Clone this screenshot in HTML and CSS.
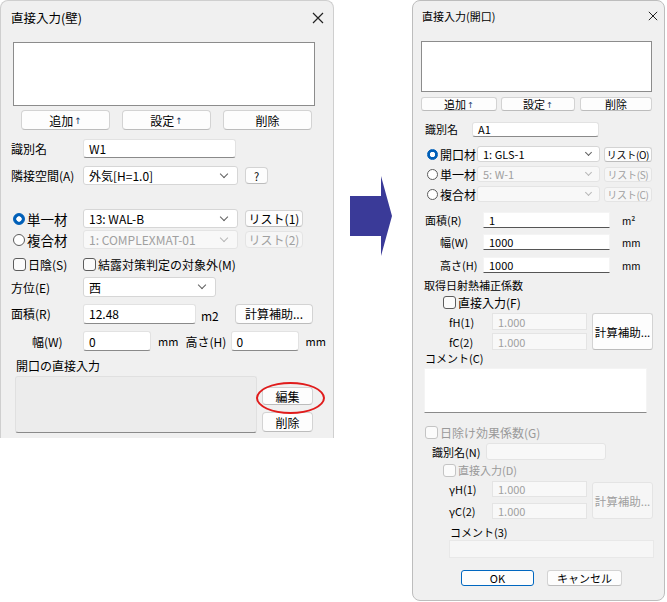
FILE: index.html
```html
<!DOCTYPE html>
<html lang="ja">
<head>
<meta charset="UTF-8">
<title>直接入力</title>
<link rel="stylesheet" href="styles.css">
</head>
<body>
<div class="stage">

  <!-- 壁の直接入力 -->
  <div class="dlg wall">
    <div class="titlebar"><span>直接入力(壁)</span>
      <svg class="close" viewBox="0 0 12 12"><path d="M1 1L11 11M11 1L1 11"/></svg>
    </div>
    <div class="listbox"></div>
    <div class="btnrow">
      <button class="btn">追加<span class="up">↑</span></button>
      <button class="btn">設定<span class="up">↑</span></button>
      <button class="btn">削除</button>
    </div>
    <div class="row w-id"><span class="lbl">識別名</span><div class="edit">W1</div></div>
    <div class="row w-adj"><span class="lbl">隣接空間(A)</span><div class="combo">外気[H=1.0]</div><button class="btn q">?</button></div>
    <div class="row w-single"><span class="opt"><i class="radio on"></i>単一材</span><div class="combo">13: WAL-B</div><button class="btn list">リスト(1)</button></div>
    <div class="row w-complex"><span class="opt"><i class="radio"></i>複合材</span><div class="combo off">1: COMPLEXMAT-01</div><button class="btn list off">リスト(2)</button></div>
    <div class="row w-check"><span class="chk-item first"><i class="box"></i>日陰(S)</span><span class="chk-item"><i class="box"></i>結露対策判定の対象外(M)</span></div>
    <div class="row w-dir"><span class="lbl">方位(E)</span><div class="combo">西</div></div>
    <div class="row w-area"><span class="lbl">面積(R)</span><div class="edit">12.48</div><span class="unit">m2</span><button class="btn calc">計算補助...</button></div>
    <div class="row w-size"><span class="lbl">幅(W)</span><div class="edit">0</div><span class="unit">mm</span><span class="lbl2">高さ(H)</span><div class="edit">0</div><span class="unit">mm</span></div>
    <div class="row w-sub">開口の直接入力</div>
    <div class="row w-box">
      <div class="openlist"></div>
      <div class="side">
        <span class="mark"><button class="btn">編集</button></span>
        <button class="btn del">削除</button>
      </div>
    </div>
  </div>

  <svg class="arrow" viewBox="0 0 42 80"><path d="M0 20H31V0L42 40L31 80V60H0Z"/></svg>

  <!-- 開口の直接入力 -->
  <div class="dlg opening">
    <div class="titlebar"><span>直接入力(開口)</span>
      <svg class="close" viewBox="0 0 12 12"><path d="M1 1L11 11M11 1L1 11"/></svg>
    </div>
    <div class="listbox"></div>
    <div class="btnrow">
      <button class="btn">追加<span class="up">↑</span></button>
      <button class="btn">設定<span class="up">↑</span></button>
      <button class="btn">削除</button>
    </div>
    <div class="row o-id"><span class="lbl">識別名</span><div class="edit">A1</div></div>
    <div class="row o-mat"><span class="opt"><i class="radio on"></i>開口材</span><div class="combo">1: GLS-1</div><button class="btn list">リスト(O)</button></div>
    <div class="row o-mat next"><span class="opt"><i class="radio"></i>単一材</span><div class="combo off">5: W-1</div><button class="btn list off">リスト(S)</button></div>
    <div class="row o-mat next"><span class="opt"><i class="radio"></i>複合材</span><div class="combo off"></div><button class="btn list off">リスト(C)</button></div>
    <div class="row o-area"><span class="lbl">面積(R)</span><div class="edit">1</div><span class="unit">m²</span></div>
    <div class="row o-w"><span class="lbl">幅(W)</span><div class="edit">1000</div><span class="unit">mm</span></div>
    <div class="row o-h"><span class="lbl">高さ(H)</span><div class="edit">1000</div><span class="unit">mm</span></div>
    <div class="row o-head">取得日射熱補正係数</div>
    <div class="row o-chkF"><span class="chk-item"><i class="box"></i>直接入力(F)</span></div>
    <div class="row o-coef">
      <div class="coef-fields">
        <div class="coef-row"><span class="lbl">fH(1)</span><div class="edit off">1.000</div></div>
        <div class="coef-row"><span class="lbl">fC(2)</span><div class="edit off">1.000</div></div>
      </div>
      <button class="btn calc">計算補助...</button>
    </div>
    <div class="row o-cmt">コメント(C)</div>
    <div class="memo"></div>
    <div class="row o-chkG"><span class="chk-item off"><i class="box"></i>日除け効果係数(G)</span></div>
    <div class="row o-idN"><span class="lbl">識別名(N)</span><div class="edit off"></div></div>
    <div class="row o-chkD"><span class="chk-item off"><i class="box"></i>直接入力(D)</span></div>
    <div class="row o-coef o-gam">
      <div class="coef-fields">
        <div class="coef-row"><span class="lbl">γH(1)</span><div class="edit off">1.000</div></div>
        <div class="coef-row"><span class="lbl">γC(2)</span><div class="edit off">1.000</div></div>
      </div>
      <button class="btn calc off">計算補助...</button>
    </div>
    <div class="row o-cmt3">コメント(3)</div>
    <div class="memo memo3"></div>
    <div class="row o-ok"><button class="btn ok">OK</button><button class="btn cancel">キャンセル</button></div>
  </div>

</div>
</body>
</html>
```

FILE: styles.css
```css
* {
    box-sizing: border-box;
}

body {
    margin: 0;
    background: #fff;
    color: #000;
    font-family: "Noto Sans CJK JP", "Noto Sans", sans-serif;
}

.stage {
    display: flex;
    align-items: flex-start;
    width: 667px;
    height: 602px;
}

/* dialogs */
.dlg {
    flex: none;
    background: #f0f0f0;
    border: 1px solid #cfcfcf;
}

.wall {
    width: 334px;
    height: 438px;
    border-bottom: none;
    border-radius: 8px 8px 0 0;
    font-size: 12px;
}

.opening {
    width: 253px;
    height: 601px;
    margin-left: 20px;
    border-radius: 8px;
    border-color: #bdbdbd;
    font-size: 11px;
}

.arrow {
    flex: none;
    width: 42px;
    height: 80px;
    margin: 176px 0 0 16px;
    fill: #3a3a98;
}

.titlebar {
    display: flex;
    align-items: center;
    justify-content: space-between;
}

.close {
    fill: none;
    stroke: #222;
    stroke-width: 1.2;
}

.wall .titlebar {
    height: 33px;
    padding: 0 9px 0 10px;
    font-size: 12.5px;
}

.wall .close {
    width: 12px;
    height: 12px;
}

.opening .titlebar {
    height: 29px;
    padding: 0 6px 0 9px;
}

.opening .close {
    width: 10px;
    height: 10px;
}

/* controls */
.row {
    display: flex;
    align-items: center;
    white-space: nowrap;
}

.lbl {
    flex: none;
}

.listbox {
    background: #fff;
    border: 1px solid #8c8c8c;
}

.btnrow {
    display: flex;
}

.btn {
    flex: none;
    display: flex;
    align-items: center;
    justify-content: center;
    height: 100%;
    padding: 0;
    font: inherit;
    color: #000;
    background: #fdfdfd;
    border: 1px solid #d3d3d3;
    border-bottom-color: #bcbcbc;
    border-radius: 4px;
    white-space: nowrap;
}

.up {
    font-family: "DejaVu Sans", sans-serif;
    font-size: 0.75em;
    color: #1a3a6a;
    margin-left: 1px;
    padding-top: 2px;
}

.edit {
    flex: none;
    display: flex;
    align-items: center;
    height: 100%;
    padding-left: 5px;
    background: #fff;
    border: 1px solid #e2e2e2;
    border-bottom-color: #8a8a8a;
    border-radius: 3px;
}

.combo {
    flex: none;
    display: flex;
    align-items: center;
    height: 100%;
    padding-left: 5px;
    background: #fff;
    border: 1px solid #d6d6d6;
    border-radius: 3px;
}

.combo::after {
    content: "";
    margin-left: auto;
    margin-right: 10px;
    width: 5px;
    height: 5px;
    border-right: 1px solid #606060;
    border-bottom: 1px solid #606060;
    transform: translateY(-2px) rotate(45deg);
}

.combo.off,
.edit.off {
    color: #a0a0a0;
    background: #f8f8f8;
    border-color: #e4e4e4;
}

.combo.off::after {
    border-color: #b8b8b8;
}

.btn.off {
    color: #a0a0a0;
    background: #f6f6f6;
    border-color: #e4e4e4;
}

.opt {
    flex: none;
    display: flex;
    align-items: center;
    gap: 2px;
}

.radio {
    flex: none;
    width: 12px;
    height: 12px;
    border: 1px solid #5c5c5c;
    border-radius: 50%;
    background: #fff;
}

.radio.on {
    border-color: #005fb8;
    background: radial-gradient(circle, #fff 0 2.4px, #005fb8 3px);
}

.chk-item {
    display: flex;
    align-items: center;
    gap: 2px;
}

.box {
    flex: none;
    width: 13px;
    height: 13px;
    border: 1px solid #5c5c5c;
    border-radius: 3px;
    background: #fbfbfb;
}

.chk-item.off {
    color: #9a9a9a;
}

.chk-item.off .box {
    border-color: #c4c4c4;
}

/* 壁 */
.wall .row {
    padding-left: 10px;
}

.wall .lbl {
    width: 72px;
}

.wall .listbox {
    width: 302px;
    height: 64px;
    margin: 8px 0 0 12px;
}

.wall .btnrow {
    height: 20px;
    margin: 4px 0 0 20px;
    gap: 12px;
}

.wall .btnrow .btn {
    width: 89px;
}

.w-id {
    margin-top: 9px;
    height: 19px;
}

.w-id .edit {
    width: 153px;
}

.w-adj {
    margin-top: 8px;
    height: 19px;
}

.wall .combo {
    width: 155px;
}

.q {
    width: 23px;
    margin-left: 7px;
    height: 17px;
    font-size: 11px;
}

.w-single {
    margin-top: 24px;
    height: 19px;
}

.w-complex {
    margin-top: 2px;
    height: 19px;
}

.wall .opt {
    width: 72px;
    padding-left: 2px;
    font-size: 13.5px;
}

.wall .list {
    width: 58px;
    height: 17px;
    margin-left: 7px;
}

.w-check {
    margin-top: 8px;
    height: 14px;
}

.wall .w-check {
    padding-left: 12px;
}

.chk-item.first {
    width: 70px;
}

.w-dir {
    margin-top: 6px;
    height: 20px;
}

.wall .w-dir .combo {
    width: 133px;
}

.w-area {
    margin-top: 6px;
    height: 21px;
}

.w-area .edit {
    width: 113px;
    height: 20px;
}

.w-area .unit {
    width: 34px;
    margin-left: 5px;
    padding-top: 4px;
}

.wall .calc {
    width: 78px;
    height: 20px;
}

.w-size {
    margin-top: 7px;
    height: 20px;
}

.wall .w-size .lbl {
    padding-left: 21px;
}

.w-size .edit {
    width: 68px;
}

.w-size .unit {
    width: 28px;
    margin-left: 7px;
    font-size: 11px;
}

.lbl2 {
    width: 46px;
}

.wall .w-sub {
    margin-top: 6px;
    height: 16px;
    padding-left: 15px;
}

.wall .w-box {
    margin-top: 3px;
    height: 57px;
    padding-left: 14px;
    align-items: stretch;
}

.openlist {
    width: 242px;
    background: #ececec;
    border: 1px solid #e0e0e0;
    border-bottom-color: #8a8a8a;
    border-radius: 3px;
}

.side {
    display: flex;
    flex-direction: column;
    width: 51px;
    margin-left: 5px;
    padding-top: 11px;
    gap: 7px;
}

.mark {
    position: relative;
    display: block;
    height: 18px;
}

.mark .btn {
    width: 100%;
}

.mark::after {
    content: "";
    position: absolute;
    left: -6px;
    top: -5px;
    width: 65px;
    height: 28px;
    border: 2px solid #e01b1b;
    border-radius: 50%;
}

.side .del {
    height: 20px;
}

/* 開口 */
.opening .row {
    padding-left: 12px;
}

.opening .listbox {
    width: 231px;
    height: 51px;
    margin: 11px 0 0 8px;
}

.opening .btnrow {
    height: 14px;
    margin: 5px 0 0 8px;
}

.opening .btnrow .btn {
    width: 76px;
}

.opening .btnrow .btn + .btn {
    width: 74px;
    margin-left: 4px;
}

.opening .btnrow .btn:last-child {
    width: 72px;
    margin-left: 5px;
}

.opening .btn {
    border-radius: 3px;
}

.o-id {
    margin-top: 10px;
    height: 16px;
}

.o-id .lbl {
    width: 47px;
}

.o-id .edit {
    width: 127px;
    height: 15px;
}

.opening .o-mat {
    margin-top: 9px;
    height: 16px;
    padding-left: 14px;
}

.opening .o-mat.next {
    margin-top: 4px;
}

.opening .opt {
    width: 50px;
    font-size: 12px;
}

.opening .radio {
    width: 11px;
    height: 11px;
}

.opening .combo {
    width: 123px;
}

.opening .combo::after {
    width: 4px;
    height: 4px;
    margin-right: 8px;
}

.opening .list {
    width: 48px;
    height: 15px;
    margin-left: 4px;
    font-size: 10px;
    letter-spacing: -0.3px;
}

.o-area {
    margin-top: 10px;
    height: 16px;
}

.o-area .lbl,
.o-w .lbl,
.o-h .lbl {
    width: 58px;
}

.o-area .edit,
.o-w .edit,
.o-h .edit {
    width: 127px;
    background: #fff;
    border-color: #f4f4f4 #f4f4f4 #555;
    border-radius: 0;
}

.opening .unit {
    margin-left: 12px;
    font-size: 10px;
}

.o-w {
    margin-top: 6px;
    height: 16px;
}

.o-h {
    margin-top: 7px;
    height: 16px;
}

.opening .o-w,
.opening .o-h {
    padding-left: 27px;
}

.o-w .lbl,
.o-h .lbl {
    width: 43px;
}

.opening .o-head {
    margin-top: 5px;
    height: 14px;
    padding-left: 11px;
}

.opening .o-chkF,
.opening .o-chkD {
    margin-top: 3px;
    height: 14px;
    padding-left: 30px;
    font-size: 12px;
}

.opening .o-chkD {
    font-size: 11px;
}

.opening .o-coef {
    margin-top: 4px;
    height: 37px;
    padding-left: 36px;
    align-items: stretch;
}

.coef-fields {
    display: flex;
    flex-direction: column;
    gap: 3px;
    width: 138px;
}

.coef-row {
    display: flex;
    align-items: center;
    height: 17px;
}

.coef-row .lbl {
    width: 43px;
}

.coef-row .edit {
    width: 95px;
    border-radius: 0;
}

.opening .o-coef .calc {
    width: 61px;
    height: 37px;
    margin-left: 5px;
    font-size: 11.5px;
}

.opening .o-gam {
    height: 38px;
}

.o-gam .coef-fields {
    gap: 6px;
}

.o-gam .coef-row {
    height: 16px;
}

.opening .o-gam .calc {
    height: 37px;
    margin-top: 1px;
}

.opening .o-cmt {
    margin-top: 1px;
    height: 14px;
}

.memo {
    width: 223px;
    height: 45px;
    margin: 3px 0 0 11px;
    background: #fff;
    border: 1px solid #f4f4f4;
    border-bottom-color: #8a8a8a;
}

.memo3 {
    width: 205px;
    height: 18px;
    margin: 1px 0 0 36px;
    background: #f6f6f6;
    border-color: #e8e8e8;
}

.opening .o-chkG {
    margin-top: 12px;
    height: 14px;
    font-size: 12px;
}

.opening .o-idN {
    margin-top: 4px;
    height: 17px;
    padding-left: 19px;
}

.o-idN .lbl {
    width: 54px;
}

.o-idN .edit {
    width: 120px;
}

.opening .o-cmt3 {
    margin-top: 6px;
    height: 14px;
    padding-left: 37px;
}

.opening .o-ok {
    margin-top: 12px;
    height: 16px;
    padding-left: 48px;
}

.ok {
    width: 73px;
    border-color: #0067c0;
}

.cancel {
    width: 75px;
    margin-left: 13px;
}
```
